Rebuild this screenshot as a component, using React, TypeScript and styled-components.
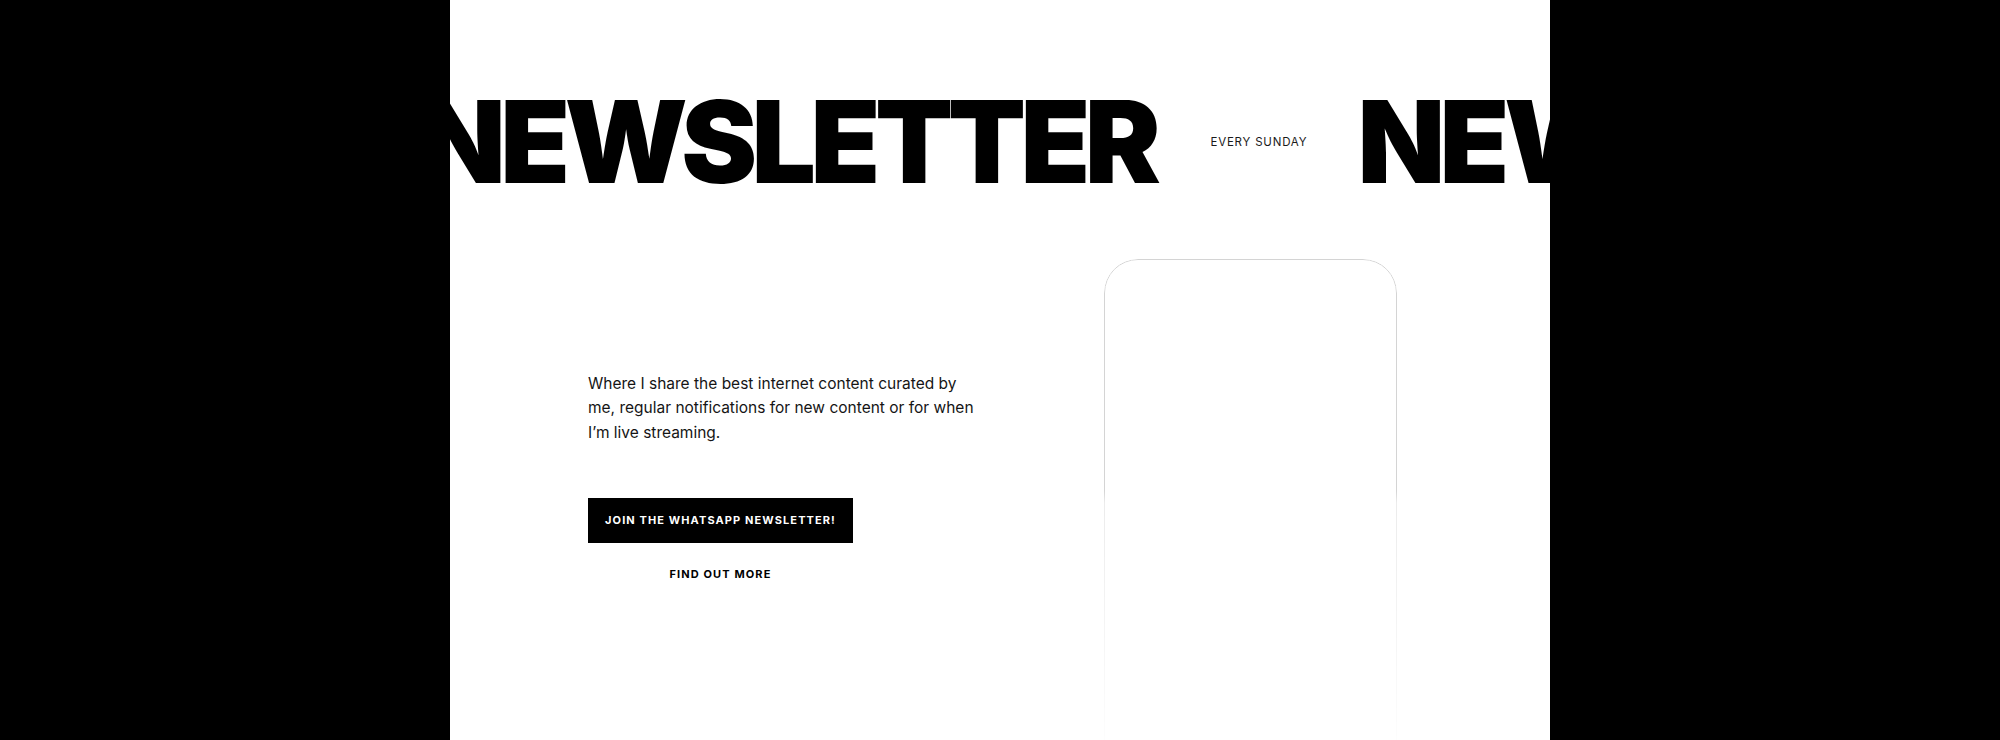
import React from "react";
import styled, { createGlobalStyle } from "styled-components";

const GlobalStyle = createGlobalStyle`
  html, body {
    margin: 0;
    padding: 0;
    background: #000;
  }
  body {
    font-family: "Inter", "Liberation Sans", sans-serif;
    -webkit-font-smoothing: antialiased;
  }
  * { box-sizing: border-box; }
`;

const Page = styled.div`
  display: flex;
  justify-content: center;
  background: #000;
  min-height: 740px;
`;

const Panel = styled.section`
  width: 1100px;
  height: 740px;
  background: #fff;
  overflow: hidden;
  display: flex;
  flex-direction: column;
`;

const Ticker = styled.div`
  height: 259px;
  padding-top: 85px;
  overflow: hidden;
  flex-shrink: 0;
`;

const Track = styled.div`
  display: flex;
  align-items: center;
  white-space: nowrap;
  transform: translateX(-32px);
`;

const Word = styled.span`
  font-family: "Inter", "Liberation Sans", sans-serif;
  font-weight: 900;
  font-size: 114px;
  line-height: 1;
  letter-spacing: -5.5px;
  color: #000;
  flex-shrink: 0;
`;

const Tag = styled.span`
  font-family: "Inter", "Liberation Sans", sans-serif;
  font-weight: 400;
  font-size: 11.5px;
  letter-spacing: 0.8px;
  color: #1a1a1a;
  margin: 0 50px 0 55px;
  flex-shrink: 0;
`;

const Content = styled.div`
  display: flex;
  justify-content: space-between;
  align-items: flex-start;
  padding: 0 153px 0 138px;
`;

const Info = styled.div`
  width: 410px;
  margin-top: 113px;
  display: flex;
  flex-direction: column;
  align-items: flex-start;
`;

const Text = styled.p`
  margin: 0;
  width: 390px;
  font-family: "Inter", "Liberation Sans", sans-serif;
  font-size: 15.5px;
  line-height: 24.3px;
  color: #151515;
`;

const Actions = styled.div`
  margin-top: 53px;
  display: flex;
  flex-direction: column;
  align-items: center;
  gap: 24px;
`;

const PrimaryButton = styled.button`
  width: 265px;
  height: 45px;
  border: none;
  background: #000;
  color: #fff;
  font-family: "Inter", "Liberation Sans", sans-serif;
  font-weight: 700;
  font-size: 11px;
  letter-spacing: 1.1px;
  cursor: pointer;
`;

const LinkButton = styled.a`
  font-family: "Inter", "Liberation Sans", sans-serif;
  font-weight: 700;
  font-size: 11px;
  line-height: 14px;
  letter-spacing: 1.1px;
  color: #000;
  text-decoration: none;
  cursor: pointer;
`;

const Phone = styled.div`
  width: 293px;
  height: 620px;
  border: 1px solid #d4d4d4;
  border-radius: 34px;
  background: #fff;
  -webkit-mask-image: linear-gradient(
    to bottom,
    #000 0px,
    #000 232px,
    rgba(0, 0, 0, 0.45) 244px,
    rgba(0, 0, 0, 0.05) 480px,
    transparent 560px
  );
  mask-image: linear-gradient(
    to bottom,
    #000 0px,
    #000 232px,
    rgba(0, 0, 0, 0.45) 244px,
    rgba(0, 0, 0, 0.05) 480px,
    transparent 560px
  );
`;

export default function App() {
  return (
    <>
      <GlobalStyle />
      <Page>
        <Panel>
          <Ticker>
            <Track>
              <Word>NEWSLETTER</Word>
              <Tag>EVERY SUNDAY</Tag>
              <Word>NEWSLETTER</Word>
            </Track>
          </Ticker>
          <Content>
            <Info>
              <Text>
                Where I share the best internet content curated by me, regular
                notifications for new content or for when I’m live streaming.
              </Text>
              <Actions>
                <PrimaryButton>JOIN THE WHATSAPP NEWSLETTER!</PrimaryButton>
                <LinkButton>FIND OUT MORE</LinkButton>
              </Actions>
            </Info>
            <Phone />
          </Content>
        </Panel>
      </Page>
    </>
  );
}
